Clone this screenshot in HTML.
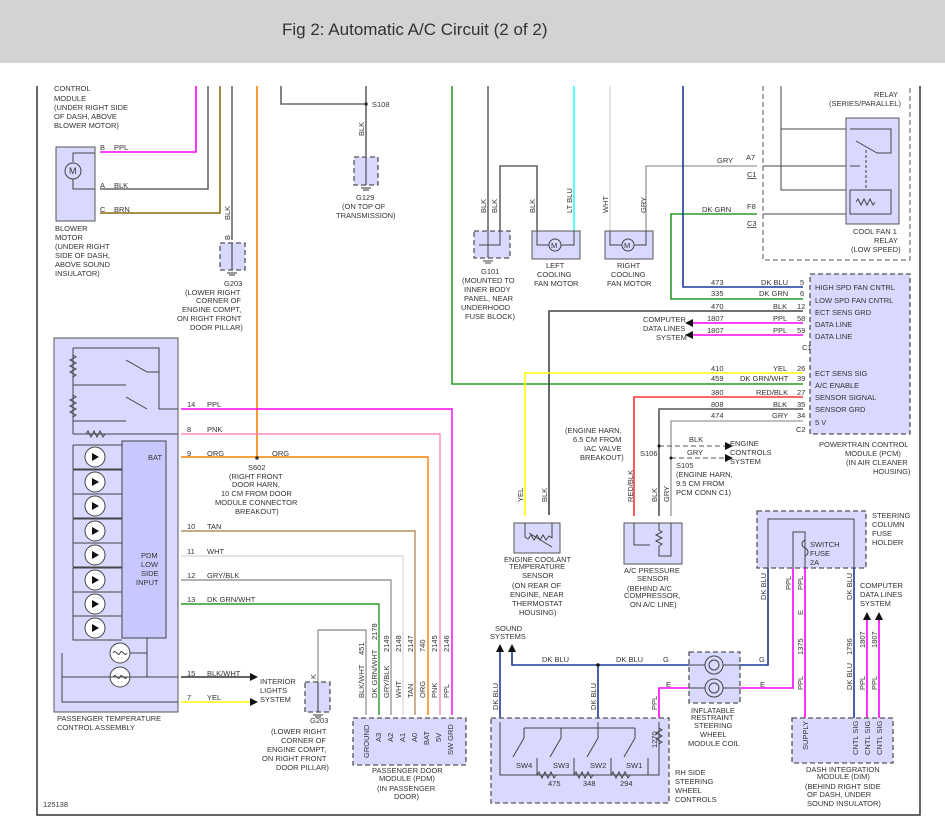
<!DOCTYPE html>
<html><head><meta charset="utf-8"><style>
html,body{margin:0;padding:0;background:#fff;width:945px;height:827px;overflow:hidden}
svg{display:block}
text{font-family:"Liberation Sans",sans-serif;font-size:7.5px;fill:#333}
.t{font-size:17px;fill:#333}
.box{fill:#d9d9ff;stroke:#555;stroke-width:1}
.dbox{fill:#d9d9ff;stroke:#555;stroke-width:1.3;stroke-dasharray:5,3}
.w{fill:none;stroke-width:1.6}
.s{fill:none;stroke:#444;stroke-width:1}
</style></head><body>
<svg width="945" height="827" viewBox="0 0 945 827">
<rect x="0" y="0" width="945" height="63" fill="#d3d3d3"/>
<text x="282" y="35" class="t">Fig 2: Automatic A/C Circuit (2 of 2)</text>
<path d="M37 86V815H920V86" fill="none" stroke="#333" stroke-width="1.5"/>
<path d="M763 86V260H910V86" fill="none" stroke="#555" stroke-dasharray="5,3"/>

<path class="w" stroke="#ff00ff" d="M196 86V152H100"/>
<path class="w" stroke="#666" d="M208 86V189H100"/>
<path class="w" stroke="#8b6a14" d="M220 86V213H100"/>
<path class="w" stroke="#666" d="M232 86V240"/>
<path class="w" stroke="#ff8000" d="M257 86V457"/>
<path class="w" stroke="#666" d="M281 86V104H364M366 86V156"/>
<circle cx="366" cy="104" r="1.8" fill="#333"/>
<path class="w" stroke="#2a9a2a" d="M452 86V384H803"/>

<rect class="box" x="56" y="147" width="39" height="74"/>
<circle cx="73" cy="171" r="8" fill="none" stroke="#444"/><text x="69" y="174" style="font-size:9px">M</text>
<path class="s" d="M73 162V153H95M73 179V189H95"/>
<text x="100" y="150">B</text><text x="114" y="150">PPL</text>
<text x="100" y="188">A</text><text x="114" y="188">BLK</text>
<text x="100" y="212">C</text><text x="114" y="212">BRN</text>
<text x="54" y="91">CONTROL</text><text x="54" y="101">MODULE</text><text x="54" y="110">(UNDER RIGHT SIDE</text><text x="54" y="119">OF DASH, ABOVE</text><text x="54" y="128">BLOWER MOTOR)</text>
<text x="55" y="231">BLOWER</text><text x="55" y="240">MOTOR</text><text x="55" y="249">(UNDER RIGHT</text><text x="55" y="258">SIDE OF DASH,</text><text x="55" y="267">ABOVE SOUND</text><text x="55" y="276">INSULATOR)</text>
<rect class="dbox" x="220" y="243" width="25" height="27"/>
<path d="M232 243V270M227 273H237M229 275H235" stroke="#333"/>
<text transform="translate(230,220) rotate(-90)">BLK</text><text transform="translate(230,240) rotate(-90)">B</text>
<text x="224" y="286">G203</text>
<text x="185" y="295">(LOWER RIGHT</text><text x="196" y="303">CORNER OF</text><text x="182" y="312">ENGINE COMPT,</text><text x="177" y="321">ON RIGHT FRONT</text><text x="190" y="330">DOOR PILLAR)</text>
<rect class="dbox" x="354" y="157" width="24" height="28"/>
<path d="M366 157V185M361 188H371M363 190H369" stroke="#333"/>
<text transform="translate(364,136) rotate(-90)">BLK</text>
<text x="372" y="107">S108</text>
<text x="356" y="200">G129</text><text x="342" y="209">(ON TOP OF</text><text x="336" y="218">TRANSMISSION)</text>

<rect class="box" x="54" y="338" width="124" height="374"/>
<path class="s" d="M73 348H159V409H178M73 348V421M73 385H126M73 421V434M73 421H126M73 434H178"/>
<path class="s" d="M73 355l3 2l-6 3l6 3l-6 3l6 3l-6 3l6 3l-3 2M73 395l3 2l-6 3l6 3l-6 3l6 3l-6 3l6 3l-3 2M86 434l2-3l3 6l3-6l3 6l3-6l3 6l2-3"/>
<path class="s" d="M126 360L147 372H159M126 397L147 409"/>
<rect x="122" y="441" width="44" height="197" fill="#c8c8ff" stroke="#444"/>
<text x="148" y="460">BAT</text>
<text x="141" y="558">PDM</text><text x="141" y="567">LOW</text><text x="141" y="576">SIDE</text><text x="136" y="585">INPUT</text>
<g class="s">
<path d="M73 445V469H122M73 445H122M73 470V494H122M73 470H122M73 494V518H122M73 494H122M73 519V543H122M73 519H122M73 543V567H122M73 543H122M73 568V592H122M73 568H122M73 592V616H122M73 592H122M73 616V640H122M73 616H122"/>
</g>
<g fill="#fff" stroke="#444">
<circle cx="95" cy="457" r="10"/><circle cx="95" cy="482" r="10"/><circle cx="95" cy="506" r="10"/><circle cx="95" cy="531" r="10"/><circle cx="95" cy="555" r="10"/><circle cx="95" cy="580" r="10"/><circle cx="95" cy="604" r="10"/><circle cx="95" cy="628" r="10"/>
<circle cx="120" cy="653" r="10"/><circle cx="120" cy="677" r="10"/>
</g>
<g fill="#111">
<path d="M92 453L99 457L92 461Z"/><path d="M92 478L99 482L92 486Z"/><path d="M92 502L99 506L92 510Z"/><path d="M92 527L99 531L92 535Z"/><path d="M92 551L99 555L92 559Z"/><path d="M92 576L99 580L92 584Z"/><path d="M92 600L99 604L92 608Z"/><path d="M92 624L99 628L92 632Z"/>
</g>
<path class="s" d="M113 653c3-5 5 5 7 0s5 5 7 0M113 677c3-5 5 5 7 0s5 5 7 0"/>
<path class="s" d="M62 653V702H178M62 677H178M147 638V677M130 653H147"/>
<g stroke-width="1.4">
<path d="M181 409H452V715" stroke="#ff00ff" fill="none"/>
<path d="M181 434H440V715" stroke="#ff88bb" fill="none"/>
<path d="M181 457H428V715" stroke="#ff8000" fill="none"/>
<path d="M181 531H415V715" stroke="#b09060" fill="none"/>
<path d="M181 556H403V715" stroke="#ddd" fill="none"/>
<path d="M181 580H391V715" stroke="#999" fill="none"/>
<path d="M181 604H379V715" stroke="#2a9a2a" fill="none"/>
<path d="M181 677H250" stroke="#333" fill="none"/>
<path d="M181 702H250" stroke="#ffff00" fill="none"/>
<path d="M318 682V630H366V715" stroke="#999" fill="none"/>
</g>
<circle cx="257" cy="458" r="1.8" fill="#333"/>
<path d="M250 673L258 677L250 681ZM250 698L258 702L250 706Z" fill="#111"/>
<text x="187" y="407">14</text><text x="207" y="407">PPL</text>
<text x="187" y="432">8</text><text x="207" y="432">PNK</text>
<text x="187" y="456">9</text><text x="207" y="456">ORG</text><text x="272" y="456">ORG</text>
<text x="187" y="529">10</text><text x="207" y="529">TAN</text>
<text x="187" y="554">11</text><text x="207" y="554">WHT</text>
<text x="187" y="578">12</text><text x="207" y="578">GRY/BLK</text>
<text x="187" y="602">13</text><text x="207" y="602">DK GRN/WHT</text>
<text x="187" y="676">15</text><text x="207" y="676">BLK/WHT</text>
<text x="187" y="700">7</text><text x="207" y="700">YEL</text>
<text x="248" y="470">S602</text><text x="229" y="479">(RIGHT FRONT</text><text x="232" y="487">DOOR HARN,</text><text x="221" y="496">10 CM FROM DOOR</text><text x="215" y="505">MODULE CONNECTOR</text><text x="235" y="514">BREAKOUT)</text>
<text x="260" y="684">INTERIOR</text><text x="260" y="693">LIGHTS</text><text x="260" y="702">SYSTEM</text>
<text x="57" y="721">PASSENGER TEMPERATURE</text><text x="57" y="730">CONTROL ASSEMBLY</text>
<text x="43" y="807">125138</text>
<rect class="dbox" x="305" y="682" width="25" height="30"/><path d="M318 682V712M313 715H323M315 717H321" stroke="#333"/>
<text transform="translate(316,679) rotate(-90)">K</text>
<text x="310" y="723">G203</text>
<text x="271" y="734">(LOWER RIGHT</text><text x="281" y="743">CORNER OF</text><text x="267" y="752">ENGINE COMPT,</text><text x="262" y="761">ON RIGHT FRONT</text><text x="276" y="770">DOOR PILLAR)</text>
<rect class="dbox" x="353" y="718" width="113" height="47"/>
<g>
<text transform="translate(364,698) rotate(-90)">BLK/WHT</text><text transform="translate(364,655) rotate(-90)">451</text>
<text transform="translate(377,698) rotate(-90)">DK GRN/WHT</text><text transform="translate(377,640) rotate(-90)">2178</text>
<text transform="translate(389,698) rotate(-90)">GRY/BLK</text><text transform="translate(389,652) rotate(-90)">2149</text>
<text transform="translate(401,698) rotate(-90)">WHT</text><text transform="translate(401,652) rotate(-90)">2148</text>
<text transform="translate(413,698) rotate(-90)">TAN</text><text transform="translate(413,652) rotate(-90)">2147</text>
<text transform="translate(425,698) rotate(-90)">ORG</text><text transform="translate(425,652) rotate(-90)">740</text>
<text transform="translate(437,698) rotate(-90)">PNK</text><text transform="translate(437,652) rotate(-90)">2145</text>
<text transform="translate(449,698) rotate(-90)">PPL</text><text transform="translate(449,652) rotate(-90)">2146</text>
<text transform="translate(369,758) rotate(-90)">GROUND</text><text transform="translate(381,742) rotate(-90)">A3</text><text transform="translate(393,742) rotate(-90)">A2</text><text transform="translate(405,742) rotate(-90)">A1</text><text transform="translate(417,742) rotate(-90)">A0</text><text transform="translate(429,745) rotate(-90)">BAT</text><text transform="translate(441,742) rotate(-90)">5V</text><text transform="translate(453,755) rotate(-90)">SW GRD</text>
</g>
<text x="372" y="773">PASSENGER DOOR</text><text x="379" y="781">MODULE (PDM)</text><text x="377" y="791">(IN PASSENGER</text><text x="394" y="799">DOOR)</text>

<path class="w" stroke="#666" d="M488 86V231M500 231V166H537V231"/>
<path class="w" stroke="#33ffff" d="M574 86V231"/>
<path class="w" stroke="#ddd" d="M610 86V231"/>
<path class="w" stroke="#aaa" d="M646 231V166H757"/>
<path class="w" stroke="#2a9a2a" d="M757 214H671V299H803"/>
<path class="w" stroke="#1a3a9a" d="M683 86V287H803"/>
<path class="s" d="M763 166H846M763 214H846M781 86V190H846M781 129H846"/>
<rect class="box" x="846" y="118" width="53" height="106"/>
<path class="s" d="M850 129H891V153H877M856 141L877 153M850 166H860M850 190V214H891V190H850M856 202l2-3l3 6l3-6l3 6l3-6l3 6l2-3"/>
<path d="M866 150V188" stroke="#444" stroke-dasharray="3,2"/>
<text x="717" y="163">GRY</text><text x="746" y="160">A7</text><text x="747" y="177" style="text-decoration:underline">C1</text>
<text x="702" y="212">DK GRN</text><text x="747" y="209">F8</text><text x="747" y="226" style="text-decoration:underline">C3</text>
<text x="853" y="234">COOL FAN 1</text><text x="874" y="243">RELAY</text><text x="851" y="252">(LOW SPEED)</text>
<text x="874" y="97">RELAY</text><text x="829" y="106">(SERIES/PARALLEL)</text>
<rect class="dbox" x="474" y="231" width="36" height="27"/>
<path class="s" d="M488 231V258M500 231V245H479M483 261H493M485 263H491"/>
<rect class="box" x="532" y="231" width="48" height="28"/>
<rect class="box" x="605" y="231" width="48" height="28"/>
<path class="s" d="M537 231V245H549M561 245H574V231M610 231V245H622M634 245H646V231"/>
<circle cx="555" cy="245" r="6" fill="none" stroke="#444"/><text x="551" y="248">M</text>
<circle cx="628" cy="245" r="6" fill="none" stroke="#444"/><text x="624" y="248">M</text>
<text transform="translate(486,213) rotate(-90)">BLK</text><text transform="translate(497,213) rotate(-90)">BLK</text>
<text transform="translate(535,213) rotate(-90)">BLK</text><text transform="translate(572,213) rotate(-90)">LT BLU</text>
<text transform="translate(608,213) rotate(-90)">WHT</text><text transform="translate(646,213) rotate(-90)">GRY</text>
<text x="481" y="274">G101</text><text x="462" y="283">(MOUNTED TO</text><text x="464" y="292">INNER BODY</text><text x="464" y="301">PANEL, NEAR</text><text x="461" y="310">UNDERHOOD</text><text x="465" y="319">FUSE BLOCK)</text>
<text x="546" y="268">LEFT</text><text x="537" y="277">COOLING</text><text x="534" y="286">FAN MOTOR</text>
<text x="617" y="268">RIGHT</text><text x="611" y="277">COOLING</text><text x="607" y="286">FAN MOTOR</text>

<rect class="dbox" x="810" y="274" width="100" height="160"/>
<path class="w" stroke="#444" d="M803 311H549V515"/>
<path class="w" stroke="#ff00ff" d="M803 323H693M803 335H693"/>
<path d="M693 319L685 323L693 327ZM693 331L685 335L693 339Z" fill="#111"/>
<path class="w" stroke="#ffff00" d="M803 373H525V516"/>
<path class="w" stroke="#ff3333" d="M803 397H634V516"/>
<path class="w" stroke="#555" d="M803 409H659V516"/>
<path class="w" stroke="#aaa" d="M803 421H671V516"/>
<path d="M659 446H725M671 458H725" stroke="#555" stroke-dasharray="5,3"/>
<path d="M725 442L733 446L725 450ZM725 454L733 458L725 462Z" fill="#111"/>
<circle cx="659" cy="446" r="1.5" fill="#111"/><circle cx="671" cy="458" r="1.5" fill="#111"/>
<g>
<text x="711" y="285">473</text><text x="761" y="285">DK BLU</text><text x="800" y="285">5</text>
<text x="711" y="296">335</text><text x="759" y="296">DK GRN</text><text x="800" y="296">6</text>
<text x="711" y="309">470</text><text x="773" y="309">BLK</text><text x="797" y="309">12</text>
<text x="707" y="321">1807</text><text x="773" y="321">PPL</text><text x="797" y="321">58</text>
<text x="707" y="333">1807</text><text x="773" y="333">PPL</text><text x="797" y="333">59</text>
<text x="711" y="371">410</text><text x="773" y="371">YEL</text><text x="797" y="371">26</text>
<text x="711" y="381">459</text><text x="740" y="381">DK GRN/WHT</text><text x="797" y="381">39</text>
<text x="711" y="395">380</text><text x="756" y="395">RED/BLK</text><text x="797" y="395">27</text>
<text x="711" y="407">808</text><text x="773" y="407">BLK</text><text x="797" y="407">35</text>
<text x="711" y="418">474</text><text x="772" y="418">GRY</text><text x="797" y="418">34</text>
<text x="802" y="350">C1</text><text x="796" y="432">C2</text>
<text x="815" y="290">HIGH SPD FAN CNTRL</text><text x="815" y="303">LOW SPD FAN CNTRL</text><text x="815" y="315">ECT SENS GRD</text><text x="815" y="327">DATA LINE</text><text x="815" y="339">DATA LINE</text>
<text x="815" y="376">ECT SENS SIG</text><text x="815" y="388">A/C ENABLE</text><text x="815" y="400">SENSOR SIGNAL</text><text x="815" y="412">SENSOR GRD</text><text x="815" y="425">5 V</text>
<text x="819" y="447">POWERTRAIN CONTROL</text><text x="845" y="456">MODULE (PCM)</text><text x="846" y="465">(IN AIR CLEANER</text><text x="873" y="474">HOUSING)</text>
<text x="643" y="322">COMPUTER</text><text x="643" y="331">DATA LINES</text><text x="656" y="340">SYSTEM</text>
<text x="565" y="433">(ENGINE HARN,</text><text x="573" y="442">6.5 CM FROM</text><text x="584" y="451">IAC VALVE</text><text x="580" y="460">BREAKOUT)</text>
<text x="640" y="456">S106</text><text x="689" y="442">BLK</text><text x="687" y="455">GRY</text>
<text x="730" y="446">ENGINE</text><text x="730" y="455">CONTROLS</text><text x="730" y="464">SYSTEM</text>
<text x="676" y="468">S105</text><text x="676" y="477">(ENGINE HARN,</text><text x="676" y="486">9.5 CM FROM</text><text x="676" y="495">PCM CONN C1)</text>
</g>
<rect class="box" x="514" y="523" width="46" height="30"/>
<path class="s" d="M525 523V537l3 2l3-4l3 5l3-5l3 5l3-5l3 5l3-4l3 2V523M529 533L552 547"/>
<rect class="box" x="624" y="523" width="58" height="41"/>
<path class="s" d="M634 523V545H650M659 523V530l3 2l-6 3l6 3l-6 3l6 3l-3 2V556H671V523"/>
<text transform="translate(523,502) rotate(-90)">YEL</text><text transform="translate(547,502) rotate(-90)">BLK</text>
<text transform="translate(633,502) rotate(-90)">RED/BLK</text><text transform="translate(657,502) rotate(-90)">BLK</text><text transform="translate(669,502) rotate(-90)">GRY</text>
<text x="504" y="562">ENGINE COOLANT</text><text x="509" y="569">TEMPERATURE</text><text x="522" y="578">SENSOR</text><text x="512" y="588">(ON REAR OF</text><text x="510" y="597">ENGINE, NEAR</text><text x="512" y="606">THERMOSTAT</text><text x="519" y="615">HOUSING)</text>
<text x="624" y="573">A/C PRESSURE</text><text x="637" y="581">SENSOR</text><text x="627" y="591">(BEHIND A/C</text><text x="624" y="598">COMPRESSOR,</text><text x="630" y="607">ON A/C LINE)</text>

<rect class="dbox" x="757" y="511" width="109" height="57"/>
<path class="s" d="M768 568V519H854V568M793 568V532H805V568M805 540c-4 2-4 6 0 8c4 2 4 6 0 8"/>
<text x="810" y="547">SWITCH</text><text x="810" y="556">FUSE</text><text x="810" y="565">2A</text>
<text x="872" y="518">STEERING</text><text x="872" y="527">COLUMN</text><text x="872" y="536">FUSE</text><text x="872" y="545">HOLDER</text>
<path class="w" stroke="#1a3a9a" d="M768 568V665H512V650M500 650V718M598 665V718"/>
<circle cx="598" cy="665" r="1.8" fill="#111"/>
<path d="M496 652L500 644L504 652ZM508 652L512 644L516 652Z" fill="#111"/>
<path class="w" stroke="#ff00ff" d="M793 568V688H740M805 568V718M690 688H659V718"/>
<path class="w" stroke="#1a3a9a" d="M854 568V718"/>
<path class="w" stroke="#ff00ff" d="M867 718V618M879 718V618"/>
<path d="M863 620L867 612L871 620ZM875 620L879 612L883 620Z" fill="#111"/>
<rect class="dbox" x="689" y="652" width="51" height="51"/>
<path class="s" d="M689 665H705M723 665H740M689 688H705M723 688H740"/>
<circle cx="714" cy="665" r="9" fill="none" stroke="#444"/><circle cx="714" cy="665" r="5" fill="none" stroke="#444"/>
<circle cx="714" cy="688" r="9" fill="none" stroke="#444"/><circle cx="714" cy="688" r="5" fill="none" stroke="#444"/>
<text x="495" y="631">SOUND</text><text x="490" y="639">SYSTEMS</text>
<text x="542" y="662">DK BLU</text><text x="616" y="662">DK BLU</text><text x="663" y="662">G</text><text x="759" y="662">G</text>
<text x="666" y="687">E</text><text x="760" y="687">E</text><text transform="translate(803,615) rotate(-90)">E</text>
<text transform="translate(498,710) rotate(-90)">DK BLU</text><text transform="translate(596,710) rotate(-90)">DK BLU</text><text transform="translate(657,710) rotate(-90)">PPL</text>
<text transform="translate(766,600) rotate(-90)">DK BLU</text><text transform="translate(791,590) rotate(-90)">PPL</text><text transform="translate(803,590) rotate(-90)">PPL</text>
<text transform="translate(803,655) rotate(-90)">1375</text><text transform="translate(803,690) rotate(-90)">PPL</text>
<text transform="translate(852,600) rotate(-90)">DK BLU</text>
<text transform="translate(852,655) rotate(-90)">1796</text><text transform="translate(865,648) rotate(-90)">1807</text><text transform="translate(877,648) rotate(-90)">1807</text>
<text transform="translate(852,690) rotate(-90)">DK BLU</text><text transform="translate(865,690) rotate(-90)">PPL</text><text transform="translate(877,690) rotate(-90)">PPL</text>
<text x="860" y="588">COMPUTER</text><text x="860" y="597">DATA LINES</text><text x="860" y="606">SYSTEM</text>
<text x="691" y="713">INFLATABLE</text><text x="691" y="720">RESTRAINT</text><text x="694" y="728">STEERING</text><text x="700" y="737">WHEEL</text><text x="688" y="746">MODULE COIL</text>
<rect class="dbox" x="491" y="718" width="178" height="85"/>
<path class="s" d="M500 722V775H659V722M524 728H635M598 722V728"/>
<path class="s" d="M524 728V738L513 757M561 728V738L550 757M598 728V738L587 757M635 728V738L624 757M537 758V775M574 758V775M611 758V775M648 758V775"/>
<path class="s" d="M537 775l2-3l3 6l3-6l3 6l3-6l3 6l2-3M574 775l2-3l3 6l3-6l3 6l3-6l3 6l2-3M611 775l2-3l3 6l3-6l3 6l3-6l3 6l2-3M659 722V728l3 2l-6 3l6 3l-6 3l6 3l-3 2V748"/>
<text transform="translate(657,748) rotate(-90)">1270</text>
<text x="516" y="768">SW4</text><text x="553" y="768">SW3</text><text x="590" y="768">SW2</text><text x="626" y="768">SW1</text>
<text x="548" y="786">475</text><text x="583" y="786">348</text><text x="620" y="786">294</text>
<text x="675" y="775">RH SIDE</text><text x="675" y="784">STEERING</text><text x="675" y="793">WHEEL</text><text x="675" y="802">CONTROLS</text>
<rect class="dbox" x="792" y="718" width="101" height="45"/>
<text transform="translate(808,750) rotate(-90)">SUPPLY</text><text transform="translate(858,755) rotate(-90)">CNTL SIG</text><text transform="translate(870,755) rotate(-90)">CNTL SIG</text><text transform="translate(882,755) rotate(-90)">CNTL SIG</text>
<text x="806" y="772">DASH INTEGRATION</text><text x="817" y="779">MODULE (DIM)</text><text x="805" y="789">(BEHIND RIGHT SIDE</text><text x="807" y="797">OF DASH, UNDER</text><text x="807" y="806">SOUND INSULATOR)</text>
</svg>
</body></html>
